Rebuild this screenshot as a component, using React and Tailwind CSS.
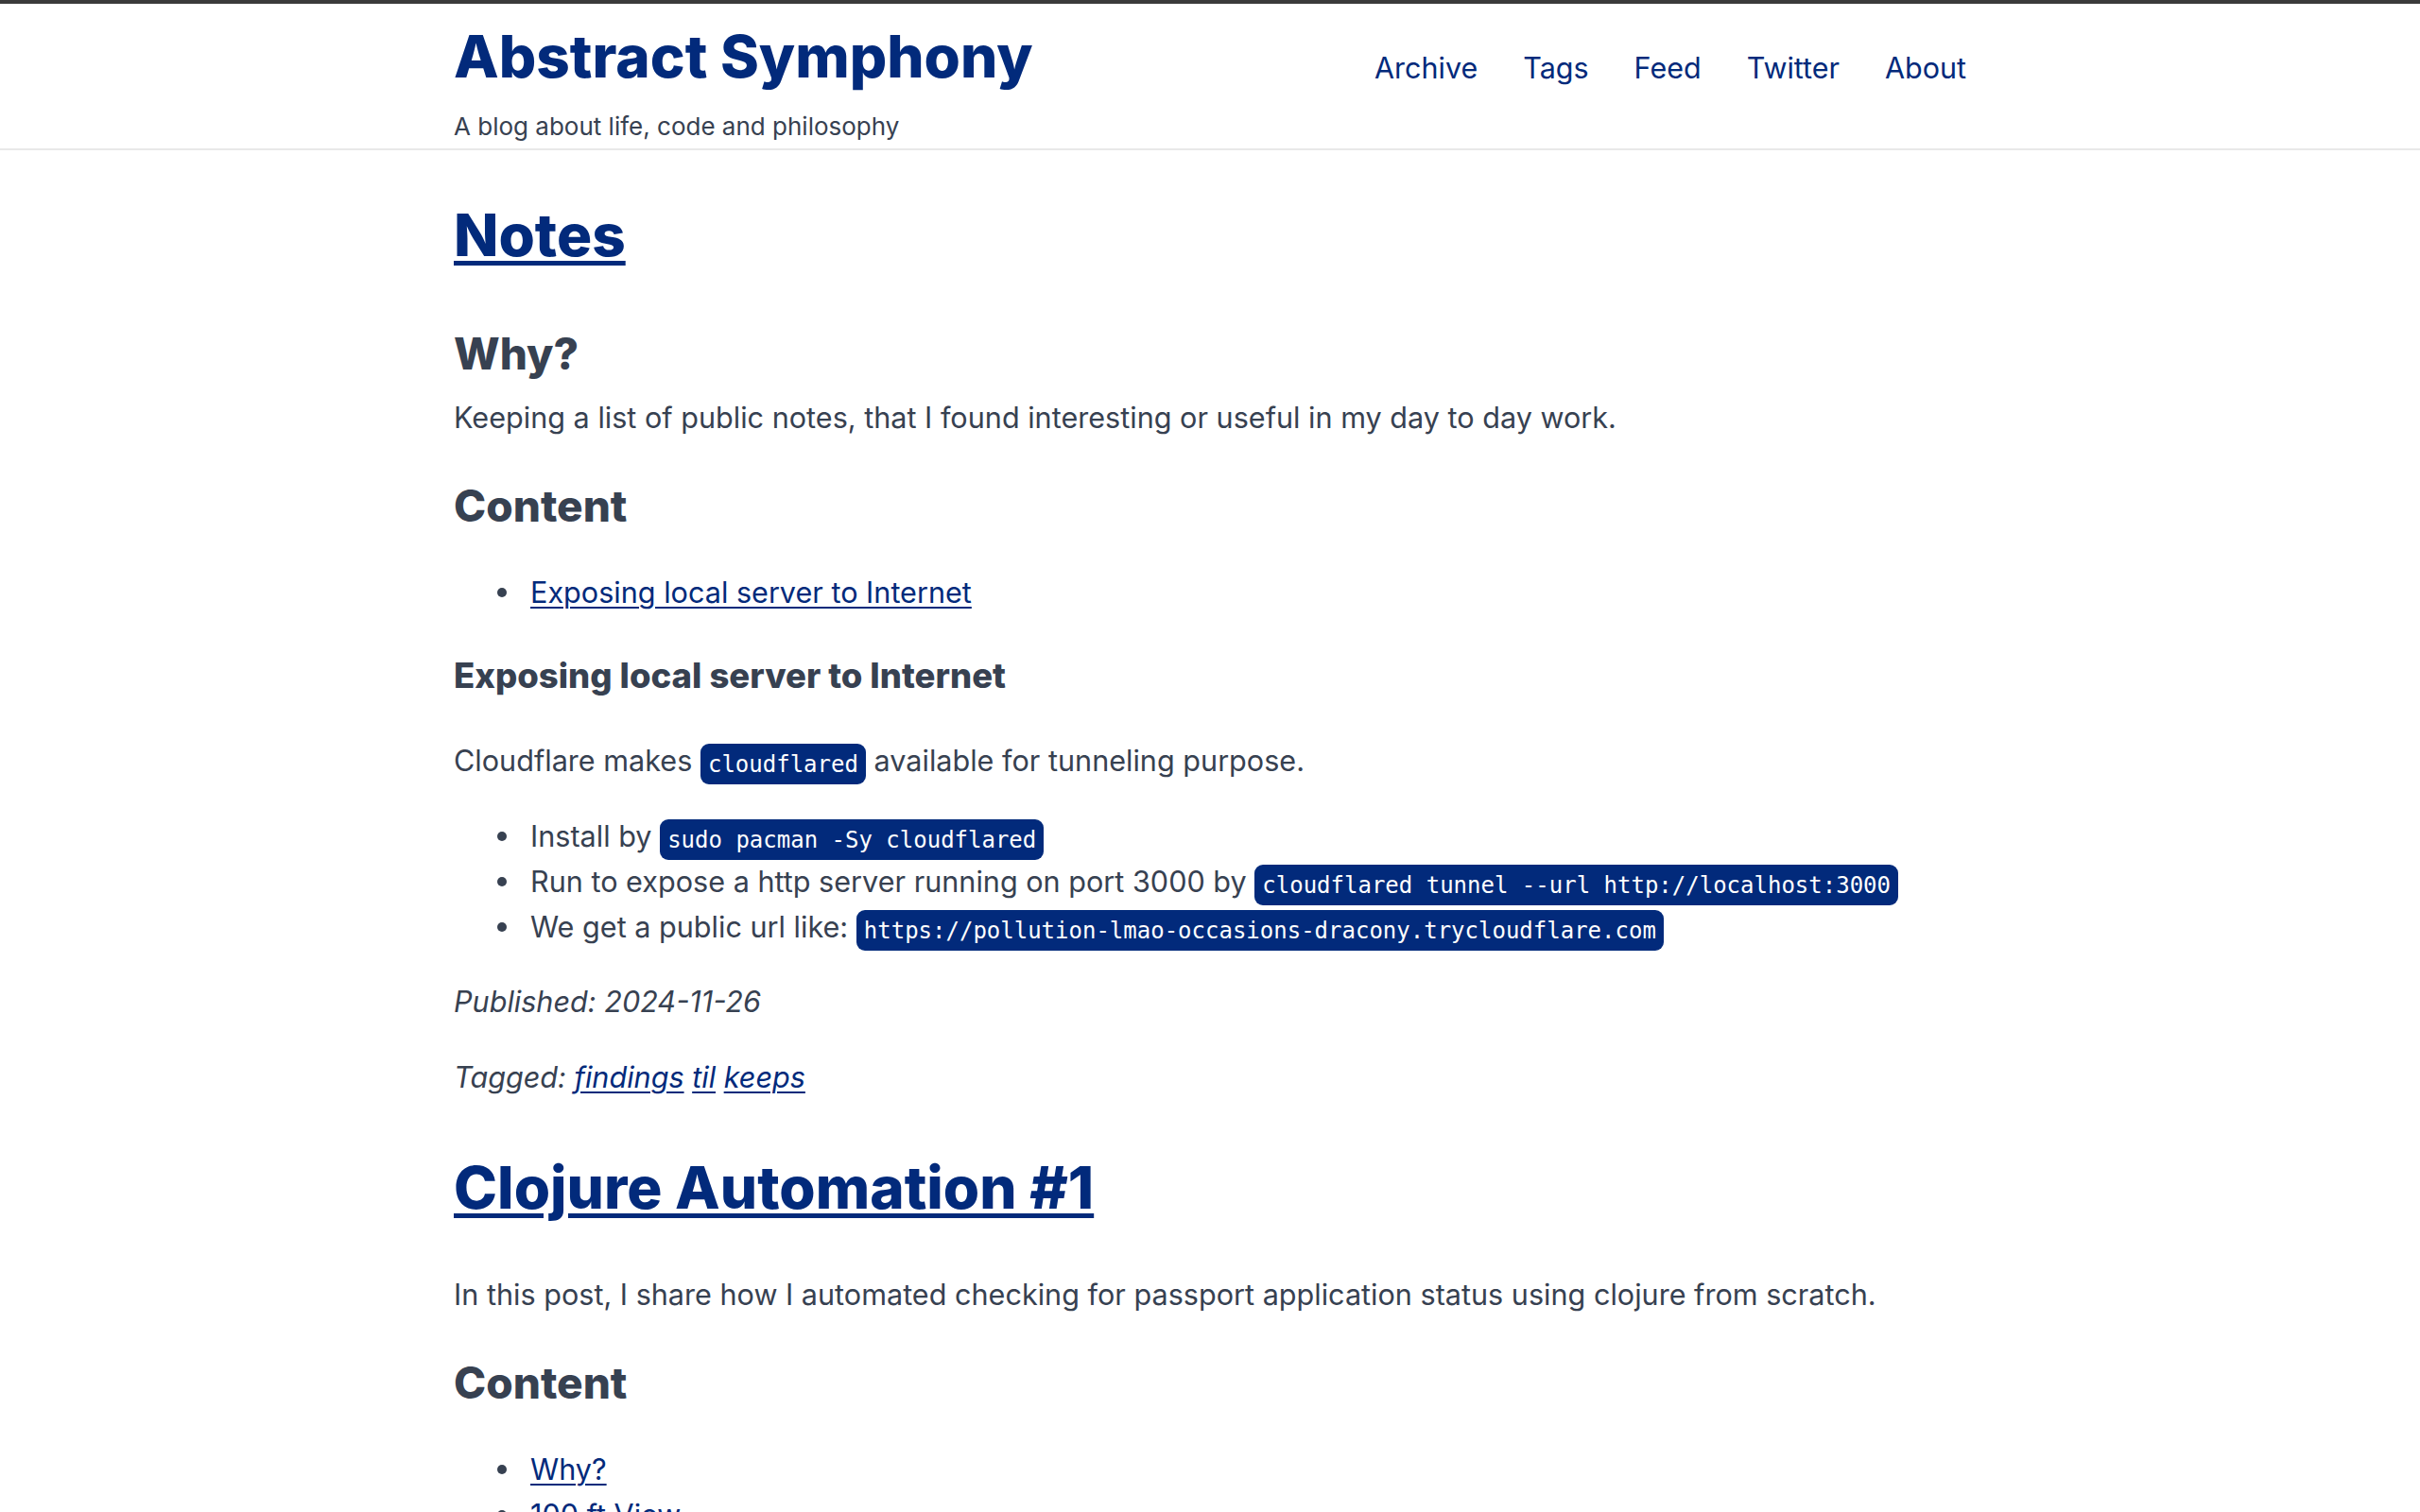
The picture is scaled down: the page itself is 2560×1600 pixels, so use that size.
import React from "react";

const NAVY = "text-[#022a7b]";

function Code({ children }) {
  return (
    <code className="font-['DejaVu_Sans_Mono',monospace] text-[24px] leading-none tracking-normal bg-[#022a7b] text-white rounded-[9px] px-[8px] py-[7.5px]">
      {children}
    </code>
  );
}

function Bullet({ children }) {
  return (
    <li className="flex items-center h-[48px] pl-[46px]">
      <span className="w-[10px] h-[10px] rounded-full bg-[#374151] shrink-0" />
      <span className="ml-[25px] whitespace-nowrap">{children}</span>
    </li>
  );
}

function A({ children, className = "" }) {
  return (
    <a href="#" className={`${NAVY} underline decoration-2 underline-offset-[4px] ${className}`}>
      {children}
    </a>
  );
}

export default function App() {
  return (
    <div className="min-h-screen bg-white font-['Inter',sans-serif] text-[#374151]">
      <div className="h-[4px] bg-[#3b3b3b]" />
      <header className="border-b-2 border-[#e8e8e8]">
        <div className="mx-auto w-[1600px] pt-[20px] pb-[5px]">
          <div className="flex items-end justify-between">
            <a href="#" className="text-[62px] leading-[72px] font-extrabold text-[#022a7b]">
              Abstract Symphony
            </a>
            <nav className="flex gap-[48px] text-[30.5px] leading-[48px] text-[#022a7b]">
              <a href="#">Archive</a>
              <a href="#">Tags</a>
              <a href="#">Feed</a>
              <a href="#">Twitter</a>
              <a href="#">About</a>
            </nav>
          </div>
          <p className="mt-[20px] text-[26px] leading-[36px] text-[#374151]">
            A blog about life, code and philosophy
          </p>
        </div>
      </header>

      <main className="mx-auto w-[1600px] pt-[54px] pb-[80px] text-[30.6px] leading-[48px]">
        <article>
          <h1 className="text-[62px] leading-[72px] font-extrabold">
            <a href="#" className="text-[#022a7b] underline decoration-[5px] underline-offset-[5px]">
              Notes
            </a>
          </h1>
          <h2 className="mt-[61px] text-[46px] leading-[56px] font-extrabold">Why?</h2>
          <p className="mt-[16px]">
            Keeping a list of public notes, that I found interesting or useful in my day to day work.
          </p>
          <h2 className="mt-[41px] text-[46px] leading-[56px] font-extrabold">Content</h2>
          <ul className="mt-[40px]">
            <Bullet>
              <A>Exposing local server to Internet</A>
            </Bullet>
          </ul>
          <h3 className="mt-[40px] text-[36.5px] leading-[48px] font-extrabold">Exposing local server to Internet</h3>
          <p className="mt-[42px]">
            Cloudflare makes <Code>cloudflared</Code> available for tunneling purpose.
          </p>
          <ul className="mt-[32px]">
            <Bullet>
              Install by <Code>sudo pacman -Sy cloudflared</Code>
            </Bullet>
            <Bullet>
              Run to expose a http server running on port 3000 by{" "}
              <Code>cloudflared tunnel --url http://localhost:3000</Code>
            </Bullet>
            <Bullet>
              We get a public url like:{" "}
              <Code>https://pollution-lmao-occasions-dracony.trycloudflare.com</Code>
            </Bullet>
          </ul>
          <p className="mt-[31px] italic">Published: 2024-11-26</p>
          <p className="mt-[32px] italic">
            Tagged: <A>findings</A> <A>til</A> <A>keeps</A>
          </p>
        </article>

        <article className="mt-[57px]">
          <h1 className="text-[62px] leading-[72px] font-extrabold">
            <a href="#" className="text-[#022a7b] underline decoration-[5px] underline-offset-[5px]">
              Clojure Automation #1
            </a>
          </h1>
          <p className="mt-[53px]">
            In this post, I share how I automated checking for passport application status using clojure from scratch.
          </p>
          <h2 className="mt-[41px] text-[46px] leading-[56px] font-extrabold">Content</h2>
          <ul className="mt-[40px]">
            <Bullet>
              <A>Why?</A>
            </Bullet>
            <Bullet>
              <A>100 ft View</A>
            </Bullet>
            <Bullet>
              <A>Implementation</A>
            </Bullet>
            <Bullet>
              <A>Conclusion</A>
            </Bullet>
          </ul>
        </article>
      </main>
    </div>
  );
}
